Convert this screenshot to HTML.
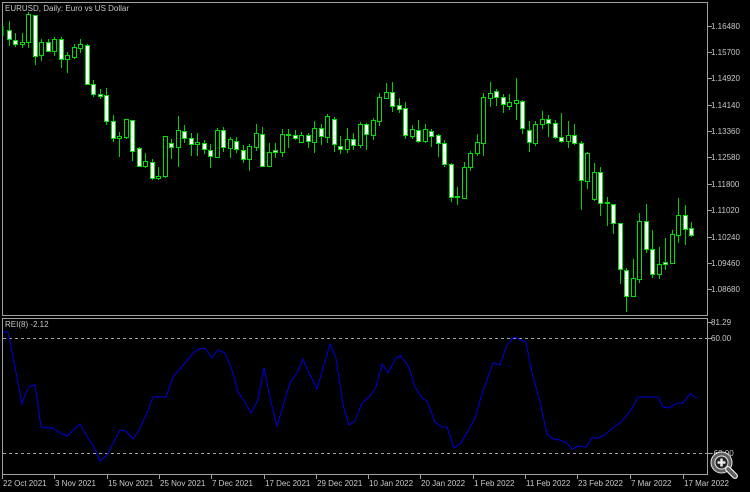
<!DOCTYPE html>
<html><head><meta charset="utf-8"><style>
html,body{margin:0;padding:0;background:#000;width:750px;height:492px;overflow:hidden}
svg{display:block}
text{font-family:"Liberation Sans",sans-serif;font-size:8px;fill:#c8c8c8}
</style></head><body>
<svg id="s" width="750" height="492" xmlns="http://www.w3.org/2000/svg" shape-rendering="crispEdges">
<rect width="750" height="492" fill="#000"/>
<g fill="none" stroke="#a0a0a0" stroke-width="1">
<rect x="2.5" y="2.5" width="705" height="313"/>
<rect x="2.5" y="318.5" width="705" height="156"/>
</g>
<g stroke="#a0a0a0" stroke-dasharray="3,3" stroke-width="1">
<line x1="3" y1="338.5" x2="707" y2="338.5"/>
<line x1="3" y1="453.5" x2="707" y2="453.5"/>
</g>
<text x="5" y="11">EURUSD, Daily:  Euro vs US Dollar</text>
<text x="5" y="327">REI(8) -2.12</text>
<g id="cd"></g>
<polyline id="rei" fill="none" stroke="#0000e0" stroke-width="1" shape-rendering="auto"/>
<g id="ax"></g>
<g shape-rendering="auto">
<circle cx="721.5" cy="462.5" r="8.5" fill="#202020" stroke="#e8e8e8" stroke-width="5"/>
<circle cx="721.5" cy="462.5" r="8.5" fill="none" stroke="#606060" stroke-width="3"/>
<line x1="728" y1="469" x2="735" y2="476" stroke="#e8e8e8" stroke-width="6" stroke-linecap="round"/>
<line x1="728" y1="469" x2="735" y2="476" stroke="#606060" stroke-width="3.5" stroke-linecap="round"/>
<line x1="717.5" y1="462.5" x2="725.5" y2="462.5" stroke="#e8e8e8" stroke-width="2.5"/>
<line x1="721.5" y1="458.5" x2="721.5" y2="466.5" stroke="#e8e8e8" stroke-width="2.5"/>
</g>
</svg>
<script>
var C=[
["D",30,39,21,46],["D",40,44,33,47],["U",42,44,33,48],["U",14,42,12,48],["D",15,56,15,65],
["U",42,55,39,61],["D",42,51,39,52],["U",39,51,37,56],["D",39,59,37,68],["U",55,59,52,73],
["U",47,57,44,59],["U",44,48,39,53],["D",45,84,44,85],["D",84,94,80,97],["D",94,96,89,99],
["D",95,121,88,125],["D",121,138,115,142],["U",136,138,132,157],["U",119,137,119,139],["D",120,151,120,161],
["D",148,166,147,166],["U",161,166,153,168],["D",162,178,159,180],["U",176,178,167,180],["U",136,176,136,178],
["D",143,147,139,159],["U",130,147,116,167],["D",131,138,125,143],["D",138,144,133,156],["U",142,144,133,156],
["D",143,149,140,154],["D",150,156,144,168],["U",130,157,128,158],["D",130,147,127,152],["U",139,148,137,158],
["D",141,149,137,153],["D",150,159,145,163],["U",146,159,144,171],["U",133,147,124,151],["D",134,166,127,167],
["U",152,166,143,167],["D",150,152,143,158],["U",134,152,129,157],["D",134,135,129,148],["D",135,138,130,140],
["U",135,142,132,143],["D",135,141,133,148],["U",128,142,121,153],["D",128,136,124,145],["U",116,137,114,143],
["D",119,144,117,152],["D",146,149,136,154],["U",139,149,128,153],["D",139,145,133,150],["U",124,145,122,148],
["D",124,134,123,150],["U",120,135,118,140],["U",97,121,93,126],["U",92,98,83,99],["D",92,106,82,112],
["D",105,109,98,113],["D",108,135,102,139],["U",129,136,125,139],["D",130,141,120,143],["U",129,141,124,143],
["D",131,136,129,147],["D",135,143,134,157],["D",143,164,140,167],["D",164,197,163,202],["D",196,197,187,205],
["U",167,198,162,199],["U",153,167,151,171],["U",142,153,134,156],["U",97,143,93,156],["U",93,98,82,107],
["D",91,97,89,106],["D",97,104,94,113],["U",102,106,94,110],["U",100,103,78,120],["D",101,128,100,134],
["D",130,142,121,152],["U",124,143,121,146],["U",119,124,111,129],["D",119,123,115,137],["D",123,137,120,139],
["D",137,141,113,143],["U",135,141,121,148],["D",135,143,124,145],["D",143,180,141,210],["U",153,181,152,189],
["U",172,199,163,201],["D",172,203,167,216],["D",202,203,197,226],["D",204,223,204,234],["D",223,269,223,284],
["D",270,296,268,312],["U",278,296,259,297],["U",221,279,213,283],["D",221,249,204,253],["D",249,274,230,278],
["U",264,274,247,279],["D",262,264,238,270],["U",234,263,230,264],["U",215,235,198,243],["D",215,229,205,245],
["D",228,235,222,237]];
var g=document.getElementById("cd"),h="";
h+='<line x1="3" y1="26" x2="3" y2="36" stroke="#00e000"/>';
for(var i=0;i<C.length;i++){var c=C[i],x=Math.round(8.5+6.5*i);
h+='<line x1="'+(x+0.5)+'" y1="'+c[3]+'" x2="'+(x+0.5)+'" y2="'+c[4]+'" stroke="#00d000"/>';
var t=c[1],b=c[2];if(b-t<1)b=t+1;
h+='<rect x="'+(x-1.5)+'" y="'+(t+0.5)+'" width="4" height="'+(b-t)+'" fill="'+(c[0]=="D"?"#fff":"#000")+'" stroke="#00e000"/>';}
g.innerHTML=h;
var P=[[3,332],[8,332],[15,367],[22,404],[27,390],[30,386],[35,385],[41,427],[47,428],[53,428],[60,433],[67,436],[80,424],[88,438],[94,447],[100,461],[107,455],[113,443],[120,430],[126,431],[133,439],[139,430],[147,413],[153,397],[166,397],[173,377],[185,363],[193,353],[199,349],[205,348],[212,358],[218,350],[225,353],[232,370],[238,392],[245,402],[251,413],[258,400],[264,368],[271,402],[277,426],[290,383],[297,373],[303,359],[309,373],[317,389],[330,344],[336,358],[343,405],[349,425],[355,421],[362,403],[370,396],[376,387],[382,364],[388,373],[396,358],[401,356],[409,367],[415,387],[422,398],[427,401],[435,422],[442,427],[447,427],[454,448],[461,443],[468,431],[475,418],[481,397],[493,363],[500,365],[507,345],[514,337],[526,342],[532,373],[536,387],[540,402],[547,434],[553,439],[560,440],[567,443],[572,449],[579,446],[586,447],[592,438],[598,438],[605,435],[610,430],[620,423],[628,414],[633,407],[638,397],[658,397],[663,407],[669,408],[677,403],[683,403],[690,394],[697,398]];
document.getElementById("rei").setAttribute("points",P.map(function(p){return p.join(",")}).join(" "));
var a="",L=[["1.16480",26],["1.15700",52],["1.14920",78],["1.14140",105],["1.13360",131],["1.12580",157],["1.11800",184],["1.11020",210],["1.10240",237],["1.09460",263],["1.08680",289],["81.29",322],["60.00",338],["-60.00",453]];
L.forEach(function(l){a+='<line x1="708" y1="'+(l[1]+0.5)+'" x2="712" y2="'+(l[1]+0.5)+'" stroke="#a0a0a0"/><text x="711" y="'+(l[1]+3)+'">'+l[0]+'</text>';});
var D=[["22 Oct 2021",2],["3 Nov 2021",54],["15 Nov 2021",107],["25 Nov 2021",159],["7 Dec 2021",211],["17 Dec 2021",264],["29 Dec 2021",316],["10 Jan 2022",368],["20 Jan 2022",420],["1 Feb 2022",473],["11 Feb 2022",525],["23 Feb 2022",577],["7 Mar 2022",630],["17 Mar 2022",683]];
D.forEach(function(d){a+='<line x1="'+(d[1]+0.5)+'" y1="475" x2="'+(d[1]+0.5)+'" y2="479" stroke="#a0a0a0"/><text x="'+(d[1]+1)+'" y="486">'+d[0]+'</text>';});
document.getElementById("ax").innerHTML=a;
</script>
</body></html>
